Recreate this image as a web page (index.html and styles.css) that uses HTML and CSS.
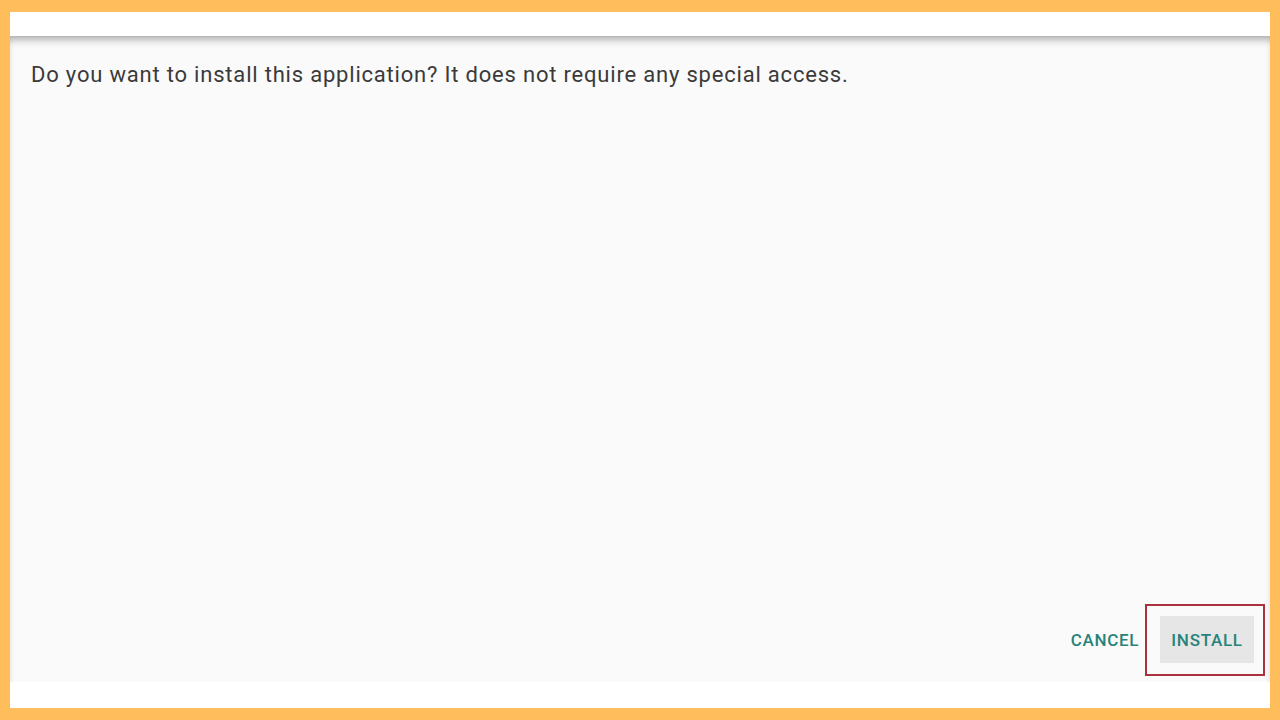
FILE: index.html
```html
<!DOCTYPE html>
<html>
<head>
<meta charset="utf-8">
<link rel="stylesheet" href="styles.css">
</head>
<body>
<div class="frame">
  <div class="topbar"></div>
  <div class="content">
    <p class="message">Do you want to install this application? It does not require any special access.</p>
    <div class="actions">
      <button class="btn">CANCEL</button>
      <div class="highlight">
        <button class="btn btn-focus">INSTALL</button>
      </div>
    </div>
  </div>
  <div class="bottombar"></div>
</div>
</body>
</html>
```
FILE: styles.css
```css
html, body {
  margin: 0;
  padding: 0;
  width: 1280px;
  height: 720px;
  overflow: hidden;
  background: #ffbd5c;
}
.frame {
  box-sizing: border-box;
  width: 1280px;
  height: 720px;
  padding: 12px 10px 12px 10px;
  display: flex;
  flex-direction: column;
}
.topbar {
  height: 24px;
  background: #ffffff;
  flex: none;
}
.content {
  flex: 1;
  background: #fafafa;
  display: flex;
  flex-direction: column;
  justify-content: space-between;
  box-shadow: inset 0 6px 8px -4px rgba(0,0,0,0.35);
  border-top: 1px solid #b8b8b8;
}
.message {
  margin: 0;
  padding: 25px 0 0 21px;
  font-family: Roboto, "Liberation Sans", sans-serif;
  font-size: 22px;
  line-height: 26px;
  color: #3a3a3a;
  letter-spacing: 0.8px;
}
.actions {
  display: flex;
  justify-content: flex-end;
  align-items: center;
  padding: 0 5px 6px 0;
  gap: 3px;
}
.btn {
  border: none;
  background: transparent;
  font-family: Roboto, "Liberation Sans", sans-serif;
  font-weight: 500;
  font-size: 17px;
  color: #27837a;
  padding: 0;
  height: 47px;
  width: 74px;
  letter-spacing: 0.7px;
}
.highlight {
  border: 2px solid #a8323e;
  padding: 10px 9px 11px 13px;
}
.btn-focus {
  background: #e6e6e6;
  width: 94px;
}
.bottombar {
  height: 26px;
  background: #ffffff;
  flex: none;
}
```
